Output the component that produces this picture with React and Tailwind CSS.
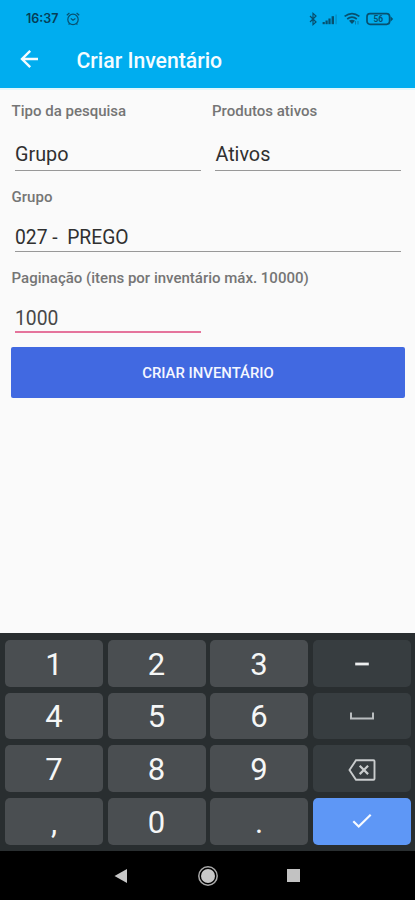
import React from "react";

const KEYS = ["1", "2", "3", "minus", "4", "5", "6", "space", "7", "8", "9", "delete", ",", "0", ".", "done"];

const StatusBar = () => (
  <div className="flex h-[38px] items-center pl-[26px] pr-[21px] text-[#07506f]">
    <span className="w-[34px] whitespace-nowrap font-['Inter',sans-serif] text-[12.5px] font-semibold leading-[38px] text-[#063e57]">
      16:37
    </span>
    <svg className="ml-[6px]" width="14" height="14" viewBox="0 0 14 14" fill="none" stroke="currentColor" strokeWidth="1.2">
      <circle cx="7" cy="7.4" r="5.2" />
      <path d="M0.8 3.2 3.4 1M13.2 3.2 10.6 1M2.6 12.5l1-1M11.4 12.5l-1-1M4.8 6.4 7 8.2l2.4-1.6" />
    </svg>
    <svg className="ml-auto" width="8" height="14" viewBox="0 0 8 14" fill="none" stroke="currentColor" strokeWidth="1.2">
      <path d="M1 4l6 6-3 2.6V1.4L7 4l-6 6" />
    </svg>
    <svg className="ml-[5px]" width="16" height="14" viewBox="0 0 16 14" fill="currentColor">
      <rect x="0.6" y="10" width="2.2" height="2.2" />
      <rect x="3.5" y="8.5" width="2.2" height="3.7" />
      <rect x="6.4" y="6.5" width="2.2" height="5.7" />
      <rect x="9.6" y="4.2" width="2.4" height="8" />
      <rect x="13.4" y="2.5" width="1.4" height="9.7" opacity="0.3" />
    </svg>
    <svg className="ml-[6px]" width="17" height="14" viewBox="0 0 17 14" fill="none" stroke="currentColor" strokeWidth="1.7">
      <path d="M0.6 4.4q7.4-5.6 14.8 0M3.2 7q4.8-3.8 9.6 0" />
      <path d="M5 8.8q3-2 6 0L8 12z" fill="currentColor" stroke="none" />
      <path d="M11.5 9v3.5M14 12.5V9" strokeWidth="1" opacity="0.5" />
    </svg>
    <svg className="ml-[5px]" width="28" height="14" viewBox="0 0 28 14">
      <rect x="1" y="1.7" width="22.6" height="10.6" rx="3" fill="none" stroke="currentColor" strokeWidth="1.7" />
      <path d="M24.5 4.2 27.2 7l-2.7 2.8z" fill="currentColor" />
      <text x="12.3" y="10.1" textAnchor="middle" fontSize="8.5" fontWeight="700" fontFamily="Roboto, sans-serif" fill="currentColor">56</text>
    </svg>
  </div>
);

const Label = ({ children }) => (
  <div className="h-[20px] whitespace-nowrap pl-[0.6px] text-[15px] font-medium leading-[20px] text-[#757575]">
    {children}
  </div>
);

const KeyFace = ({ name }) => {
  switch (name) {
    case "minus":
      return (
        <svg width="16" height="6" viewBox="0 0 16 6">
          <path d="M1.2 3h13.6" stroke="#eceeef" strokeWidth="2.8" />
        </svg>
      );
    case "space":
      return (
        <svg className="-mt-[2px]" width="26" height="10" viewBox="0 0 26 10" fill="none" stroke="#b9bdbf" strokeWidth="2">
          <path d="M2 1.5v6h22v-6" />
        </svg>
      );
    case "delete":
      return (
        <svg width="28" height="24" viewBox="0 0 28 24" fill="none" stroke="#c9cccd" strokeWidth="1.9">
          <path d="M8 2.3h17.5q1 0 1 1v17.4q0 1-1 1H8L1.5 12z" />
          <path d="m11.7 7.7 8.4 8.4m0-8.4-8.4 8.4" strokeWidth="2.2" />
        </svg>
      );
    case "done":
      return (
        <svg className="-mt-[2px]" width="20" height="16" viewBox="0 0 20 16" fill="none" stroke="#f7faff" strokeWidth="2.2">
          <path d="m1.3 8.3 5.4 5.2L18.7 1.8" />
        </svg>
      );
    default:
      return <span>{name}</span>;
  }
};

const keyColor = (name) => {
  if (name === "done") return "bg-[#5e97f6]";
  if (name.length > 1) return "bg-[#373d40]";
  return "bg-[#4a4e51]";
};

const Keyboard = () => (
  <div className="grid h-[218px] grid-cols-4 grid-rows-4 gap-x-[4.5px] gap-y-[6px] bg-[#292e30] pb-[6.5px] pl-[5px] pr-[4.5px] pt-[7px]">
    {KEYS.map((name) => (
      <button
        key={name}
        type="button"
        className={`flex items-center justify-center rounded-[5px] pt-[2px] text-[31px] leading-none text-[#f5f6f6] ${keyColor(name)}`}
      >
        <KeyFace name={name} />
      </button>
    ))}
  </div>
);

const NavBar = () => (
  <div className="flex h-[49px] items-center bg-black pl-[113px]">
    <svg width="16" height="16" viewBox="0 0 16 16" fill="#c6c6c6">
      <path d="M1.5 8 14 1v14z" />
    </svg>
    <svg className="ml-[68px]" width="22" height="22" viewBox="0 0 22 22">
      <circle cx="11" cy="11" r="9.2" fill="none" stroke="#aaaaaa" strokeWidth="1.5" />
      <circle cx="11" cy="11" r="7" fill="#c8c8c8" />
    </svg>
    <div className="ml-[68px] size-[13px] bg-[#c2c2c2]" />
  </div>
);

export default function App() {
  return (
    <div className="flex h-[900px] w-[415px] flex-col overflow-hidden bg-[#fafafa] font-['Roboto',sans-serif]">
      <header className="h-[88px] bg-[#00adef]">
        <StatusBar />
        <div className="flex h-[44px] items-center pl-[20px]">
          <svg width="20" height="20" viewBox="0 0 20 20" className="-mt-[3px]" fill="none" stroke="#f4fcff" strokeWidth="2.4">
            <path d="M18 10H2.6M10.2 1.8 2 10l8.2 8.2" />
          </svg>
          <h1 className="ml-[36.5px] whitespace-nowrap pt-[2px] text-[21.2px] font-medium leading-[28px] text-[#f4fcff]">Criar Inventário</h1>
        </div>
      </header>
      <div className="h-[2px] bg-[#e0f7fc]" />

      <main className="flex-1 pl-[11px] pr-[10px] pt-[11px]">
        <div className="flex">
          <div className="w-[200.4px]">
            <Label>Tipo da pesquisa</Label>
            <div className="ml-[4px] mt-[15px] h-[35px] w-[186px] border-b border-[#989898] text-[19.8px] leading-[37px] text-[#303030]">
              Grupo
            </div>
          </div>
          <div>
            <Label>Produtos ativos</Label>
            <div className="ml-[4px] mt-[15px] h-[35px] w-[186px] border-b border-[#989898] text-[19.8px] leading-[37px] text-[#303030]">
              Ativos
            </div>
          </div>
        </div>

        <div className="mt-[16px]">
          <Label>Grupo</Label>
          <div className="ml-[4px] mt-[12px] h-[33px] w-[386px] whitespace-pre border-b border-[#989898] text-[19.3px] leading-[37px] text-[#303030]">
            {"027 -  PREGO"}
          </div>
        </div>

        <div className="mt-[16px]">
          <Label>Paginação (itens por inventário máx. 10000)</Label>
          <div className="ml-[4px] mt-[12px] h-[33px] w-[186px] border-b-2 border-[#e5749c] text-[19.3px] leading-[37px] text-[#484848]">
            1000
          </div>
        </div>

        <button
          type="button"
          className="mt-[14px] flex h-[51px] w-full items-center justify-center rounded-[2px] bg-[#4169e1] pt-[2px] text-[14.9px] font-medium text-[#f5f7ff]"
        >
          CRIAR INVENTÁRIO
        </button>
      </main>

      <Keyboard />
      <NavBar />
    </div>
  );
}
